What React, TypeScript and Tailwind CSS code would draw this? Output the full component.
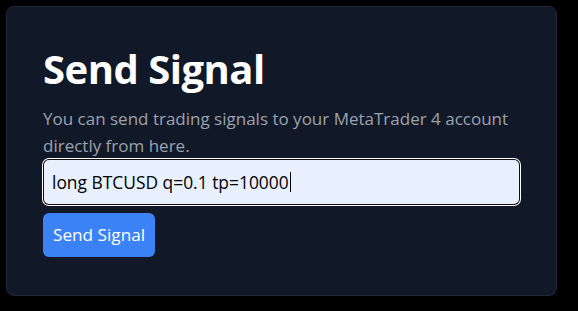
export default function App() {
  return (
    <div className="min-h-[311px] w-[578px] bg-black pl-[6px] pt-[6px]" style={{ fontFamily: '"Open Sans", "Noto Sans", sans-serif' }}>
      <div className="w-[551px] h-[290px] rounded-lg border border-[#1f2937] bg-[#111827] px-9 pt-[38px]">
        <h1 className="text-[40px] leading-[48px] font-bold text-white tracking-[-0.5px]">Send Signal</h1>
        <p className="mt-[12px] text-[17px] leading-[27px] text-[#9ca3af]">
          You can send trading signals to your MetaTrader 4 account directly from here.
        </p>
        <div className="flex h-[46px] items-center rounded-md bg-[#e8f0fe] px-[9px] text-[17.4px] text-black shadow-[0_0_0_1px_#fff,inset_0_0_0_1px_#101010]">
          <span>long BTCUSD q=0.1 tp=10000</span>
          <span className="ml-px inline-block h-[20px] w-px bg-black" />
        </div>
        <button className="mt-[8px] h-[44px] rounded-md bg-[#3b82f6] px-[10px] text-[17.2px] text-white">
          Send Signal
        </button>
      </div>
    </div>
  );
}
